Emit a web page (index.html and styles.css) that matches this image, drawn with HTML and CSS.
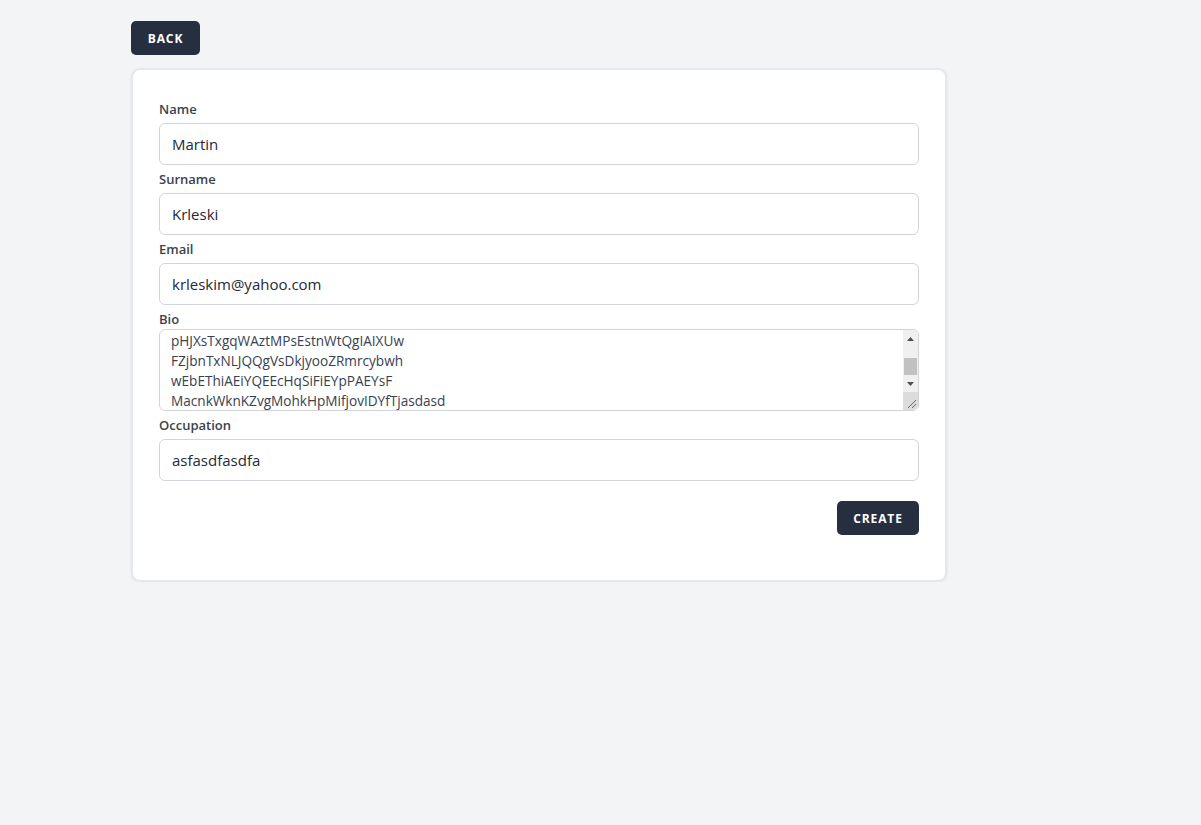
FILE: index.html
```html
<!DOCTYPE html>
<html lang="en">
<head>
<meta charset="utf-8">
<title>Create</title>
<link rel="stylesheet" href="styles.css">
</head>
<body>
<div class="page">
  <div class="wrap">
    <button class="btn back">Back</button>
    <form class="card">
      <label class="lbl">Name</label>
      <input class="field" type="text" value="Martin">
      <label class="lbl">Surname</label>
      <input class="field" type="text" value="Krleski">
      <label class="lbl">Email</label>
      <input class="field" type="text" value="krleskim@yahoo.com">
      <label class="lbl">Bio</label>
      <div class="area-wrap">
        <textarea class="area" spellcheck="false">pHJXsTxgqWAztMPsEstnWtQgIAIXUw
FZjbnTxNLJQQgVsDkjyooZRmrcybwh
wEbEThiAEiYQEEcHqSiFiEYpPAEYsF
MacnkWknKZvgMohkHpMifjovIDYfTjasdasd</textarea>
        <div class="sbar" aria-hidden="true">
          <div class="sb-btn">
            <svg width="7" height="4" viewBox="0 0 7 4"><path d="M0 4 L3.5 0 L7 4 Z" fill="#505050"/></svg>
          </div>
          <div class="sb-track"><div class="sb-thumb"></div></div>
          <div class="sb-btn">
            <svg width="7" height="4" viewBox="0 0 7 4"><path d="M0 0 L3.5 4 L7 0 Z" fill="#505050"/></svg>
          </div>
          <div class="sb-corner">
            <svg width="15" height="17" viewBox="0 0 15 17"><path d="M5 15 L13 7 M9 15 L13 11" stroke="#6a6a6a" stroke-width="1"/></svg>
          </div>
        </div>
      </div>
      <label class="lbl">Occupation</label>
      <input class="field" type="text" value="asfasdfasdfa">
      <div class="actions">
        <button class="btn create" type="button">Create</button>
      </div>
    </form>
  </div>
</div>
</body>
</html>
```
FILE: styles.css
```css
html, body {
  margin: 0;
  padding: 0;
  background: #f3f4f6;
  font-family: "Open Sans", "Noto Sans", "Liberation Sans", sans-serif;
}
.page {
  padding: 21px 0 0 131px;
}
.wrap {
  width: 816px;
  display: flex;
  flex-direction: column;
  align-items: flex-start;
}
.btn {
  background: #252f3f;
  color: #ffffff;
  border: none;
  border-radius: 5px;
  font-family: "Open Sans", "Noto Sans", sans-serif;
  font-weight: 700;
  font-size: 12px;
  letter-spacing: 0.9px;
  text-transform: uppercase;
  height: 34px;
  padding: 0 16px;
  cursor: pointer;
}
.back {
  width: 69px;
  padding: 0;
}
.card {
  margin-top: 13px;
  box-sizing: border-box;
  width: 816px;
  background: #ffffff;
  border: 2px solid #e6e7ea;
  border-radius: 9px;
  box-shadow: 0 1px 3px rgba(0,0,0,0.06), inset 0 0 0 1px #ffffff;
  padding: 25px 26px 45px 26px;
  display: flex;
  flex-direction: column;
}
.lbl {
  display: block;
  padding-top: 4px;
  line-height: 20px;
  height: 20px;
  margin-bottom: 4px;
  font-size: 13px;
  font-weight: 600;
  color: #3a4250;
}
.field {
  box-sizing: border-box;
  height: 42px;
  width: 100%;
  border: 1px solid #d1d5db;
  border-radius: 6px;
  padding: 0 12px;
  font-family: "Open Sans", "Noto Sans", sans-serif;
  font-size: 15px;
  color: #1f2937;
  background: #fff;
  outline: none;
}
.area-wrap {
  position: relative;
  margin-top: -4px;
  height: 82px;
}
.area {
  box-sizing: border-box;
  height: 82px;
  width: 100%;
  margin: 0;
  border: 1px solid #d1d5db;
  border-radius: 6px;
  padding: 1px 24px 0 11px;
  font-family: "Open Sans", "Noto Sans", sans-serif;
  font-size: 13.6px;
  line-height: 20px;
  color: #374151;
  background: #fff;
  resize: none;
  overflow: hidden;
  outline: none;
  display: block;
}
.sbar {
  position: absolute;
  top: 1px;
  right: 1px;
  bottom: 1px;
  width: 15px;
  background: #f0f0f0;
  display: flex;
  flex-direction: column;
  border-top-right-radius: 5px;
  border-bottom-right-radius: 5px;
  overflow: hidden;
}
.sb-btn {
  height: 17px;
  display: flex;
  align-items: center;
  justify-content: center;
}
.sb-track {
  height: 28px;
  display: flex;
  flex-direction: column;
  align-items: center;
  padding-top: 11px;
  box-sizing: border-box;
}
.sb-thumb {
  width: 13px;
  height: 17px;
  background: #c1c1c1;
}
.sb-corner {
  flex: 1;
  background: #dcdcdc;
  display: flex;
  align-items: flex-end;
}
.sb-corner svg {
  display: block;
}
.actions {
  display: flex;
  justify-content: flex-end;
  margin-top: 20px;
}
.create {
  width: 82px;
  padding: 0;
}
```
